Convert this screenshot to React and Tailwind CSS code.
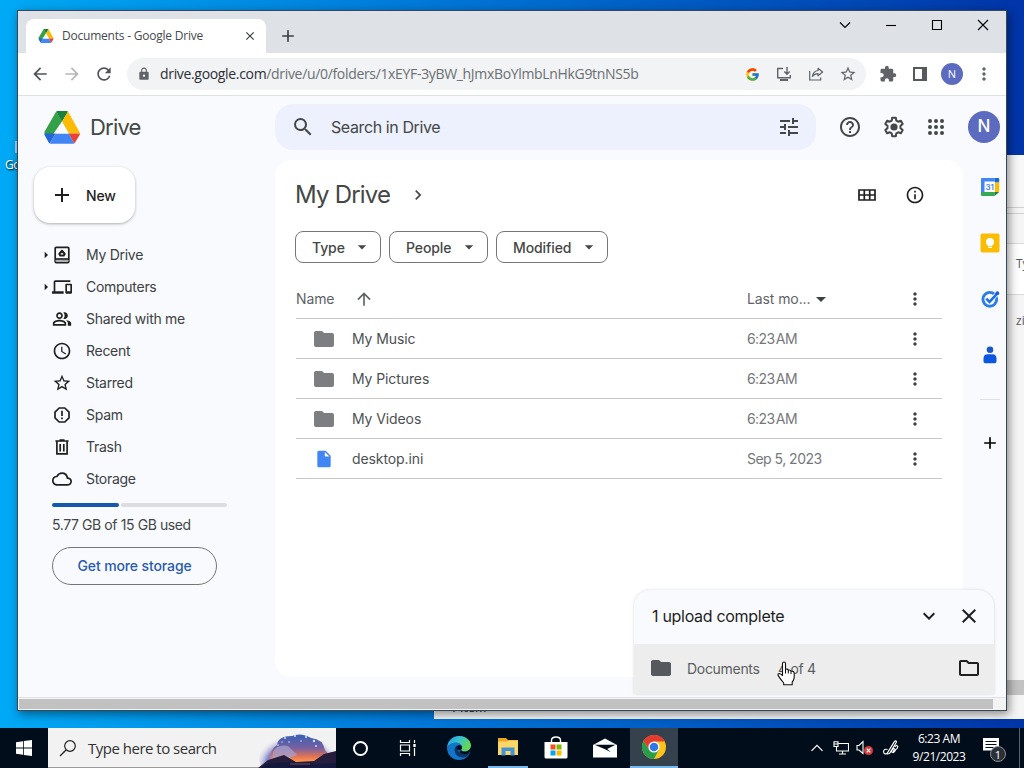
import React from "react";
import {
  MdAccessTime,
  MdAdd,
  MdArrowBack,
  MdArrowDropDown,
  MdArrowForward,
  MdArrowRight,
  MdArrowUpward,
  MdChevronRight,
  MdClose,
  MdExpandMore,
  MdExtension,
  MdFolder,
  MdHelpOutline,
  MdInfoOutline,
  MdInsertDriveFile,
  MdLock,
  MdMoreVert,
  MdOutlineCloud,
  MdOutlineDevices,
  MdOutlineFolder,
  MdOutlinePeopleAlt,
  MdRefresh,
  MdSearch,
  MdStarBorder,
  MdTune,
} from "react-icons/md";
import { FcGoogle } from "react-icons/fc";

// --- LOGOS AND CUSTOM ICONS ---
const DriveLogo = ({ className }) => (
  <svg viewBox="0 0 36 33" className={className}>
    <path d="M12.2 0.6 L0.8 20.2 Q0 21.6 0.8 23 L4.6 29.6 L18 10.4 Z" fill="#34a048" />
    <path d="M12.2 0.6 Q12.6 0 13.6 0 H22.4 Q23.6 0 24 0.6 L18 10.8 Z" fill="#188038" />
    <path d="M24 0.6 L35.2 20.4 Q36 21.8 35.9 22.4 H24.6 L18 10.8 Z" fill="#fcbc05" />
    <path d="M24.4 22.4 H36 Q36 23.2 35.4 24.2 L31.4 31 Q31 31.8 30.2 32.4 Z" fill="#ea4335" />
    <path d="M0.3 22.4 H11.6 L5.8 32.4 Q5.2 32 4.6 31.2 L0.8 24.4 Q0.2 23.4 0.3 22.4 Z" fill="#2566d8" />
    <path d="M11.6 22.4 H24.6 L30.2 32.4 Q29.6 32.8 28.6 32.8 H7.4 Q6.4 32.8 5.8 32.4 Z" fill="#4285f4" />
    <path d="M18 10.8 L24.8 22.4 H11.4 Z" fill="#f8fafd" />
  </svg>
);

const GearIcon = () => (
  <svg viewBox="0 0 24 24" className="size-6" fill="none" stroke="#444746" strokeWidth="2">
    <path d="M10.200 2.800h3.600l.5 2.800 1.900 1.100 2.700-1 1.800 3.200-2.200 1.800v2.600l2.200 1.800-1.800 3.200-2.700-1-1.900 1.100-.5 2.800h-3.600l-.5-2.800-1.900-1.100-2.700 1-1.800-3.200 2.200-1.800v-2.600L3.300 8.900l1.800-3.200 2.700 1 1.900-1.100z" strokeLinejoin="round" />
    <circle cx="12" cy="12" r="3.600" fill="#444746" stroke="none" />
  </svg>
);

const AppsIcon = () => (
  <svg viewBox="0 0 24 24" className="size-6" fill="#444746">
    {[6, 12, 18].map((y) => [6, 12, 18].map((x) => <circle key={`${x}-${y}`} cx={x} cy={y} r="2" />))}
  </svg>
);

const GridViewIcon = () => (
  <svg viewBox="0 0 18 12" className="h-3 w-[18px]" fill="none" stroke="#1f1f1f" strokeWidth="1.700">
    <path d="M1 1h16v10H1zM1 6h16M6.300 1v10M11.700 1v10" />
  </svg>
);

const MyDriveIcon = () => (
  <svg viewBox="0 0 20 20" className="size-5" fill="none" stroke="#1f1f1f" strokeWidth="1.700">
    <rect x="3.200" y="2.400" width="13.600" height="15.200" rx="1" />
    <path d="M3 14h14" />
    <path d="M8.300 10.600 7.300 9 10 5.700 12.700 9 11.700 10.600z" strokeWidth="2" strokeLinejoin="round" />
    <path d="M3 15.800h14" strokeWidth="1" stroke="#8a8d91" />
  </svg>
);

const SpamIcon = () => (
  <svg viewBox="0 0 20 20" className="size-5" fill="none" stroke="#1f1f1f" strokeWidth="1.700">
    <path d="M7.200 3h5.600L17 7.200v5.600L12.800 17H7.200L3 12.800V7.200z" strokeLinejoin="round" />
    <path d="M10 5.800v5.200M10 12.400v1.800" />
  </svg>
);

const TrashIcon = () => (
  <svg viewBox="0 0 20 20" className="size-5" fill="none" stroke="#1f1f1f" strokeWidth="1.700">
    <path d="M3.400 4h13.200M7.500 3h5M4.900 4.500v12.300h10.200V4.500M8.200 7v7.500M11.800 7v7.500" />
  </svg>
);

const InstallIcon = () => (
  <svg viewBox="0 0 16 16" className="size-4" fill="none" stroke="#5f6368" strokeWidth="1.400">
    <path d="M7 2.500H1.700v9.300h12.600V9M11 1v7M8.300 5.600 11 8.300l2.700-2.700" />
    <path d="M4 14h8" strokeWidth="2" />
  </svg>
);

const ShareIcon = () => (
  <svg viewBox="0 0 16 16" className="size-4" fill="none" stroke="#5f6368" strokeWidth="1.200">
    <path d="M1.700 5v9h11v-2.500" />
    <path d="M10 2.300 14.600 6 10 9.800V7.700c-2.700 0-4.400.9-5.600 2.800.4-3.300 2.300-5.500 5.600-6z" strokeLinejoin="round" />
  </svg>
);

const SidePanelIcon = () => (
  <svg viewBox="0 0 14 14" className="size-3.5">
    <path d="M1 1h12v12H1z" fill="none" stroke="#55585c" strokeWidth="2" />
    <path d="M9 0h5v14H9z" fill="#55585c" />
  </svg>
);

const CalendarIcon = () => (
  <svg viewBox="0 0 20 20" className="size-5">
    <path d="M2 1h12.500v4.500H5V15H1V2q0-1 1-1z" fill="#4285f4" />
    <path d="M14.500 1H18q1.200 0 1.200 1v3.500h-4.700z" fill="#1967d2" />
    <path d="M14.500 5.500h4.700v9.500h-4.700z" fill="#fbbc04" />
    <path d="M1 15h13.500v4H2q-1 0-1-1z" fill="#34a853" />
    <path d="M14.500 15h4.700l-4.700 4z" fill="#188038" />
    <path d="M4.500 4.500h10.300V15H4.500z" fill="#fff" />
    <text x="9.700" y="12.800" textAnchor="middle" fontSize="8" fontWeight="600" fontFamily="Inter, sans-serif" fill="#4285f4">31</text>
  </svg>
);

const KeepIcon = () => (
  <svg viewBox="0 0 20 20" className="size-5">
    <rect x="0.500" y="0.500" width="19" height="19" rx="1.800" fill="#fbbc04" />
    <circle cx="10" cy="9" r="4" fill="#fff" />
    <path d="M8 11h4v4H8z" fill="#fff" />
    <path d="M8 13.400h4" stroke="#fbbc04" strokeWidth=".7" />
  </svg>
);

const TasksIcon = () => (
  <svg viewBox="0 0 20 20" className="size-5" fill="none">
    <circle cx="9.800" cy="10.300" r="6.900" stroke="#2b7de9" strokeWidth="2.900" />
    <path d="m6.600 9.800 2.900 2.900 8.200-8.600" stroke="#f8fafd" strokeWidth="4.200" />
    <path d="m6.300 9.600 3.200 3.200 8.400-8.900" stroke="#1f6fe5" strokeWidth="2.600" />
    <circle cx="17.300" cy="4.200" r="1.900" fill="#1a5fd0" />
  </svg>
);

const ContactsIcon = () => (
  <svg viewBox="0 0 20 20" className="size-5">
    <circle cx="10" cy="4.700" r="3.300" fill="#1a56c4" />
    <path d="M3.500 13.500q0-4.300 4.300-4.300h4.400q4.300 0 4.300 4.300v3q0 1.800-1.800 1.800H5.300q-1.800 0-1.800-1.800z" fill="#0b57e0" />
  </svg>
);

const HandCursor = () => (
  <svg viewBox="0 0 18 25" className="absolute left-[777px] top-[661px] h-[25px] w-[18px]">
    <path
      d="M5.500 14.500V2.800Q5.500 1 7 1T8.500 2.800V8.300Q10.700 7.500 11.300 9.200 13.200 8.500 14 10.300 16.900 9.700 17.200 12.300V16.800Q16.600 19.500 15.200 21V23.700H6.700V22Q3.800 18.500 1.200 14.600.4 12.700 2.200 12.500 3.800 12.700 5.500 14.500z"
      fill="#fff" stroke="#111" strokeWidth="1.100" strokeLinejoin="round"
    />
    <path d="M8.500 8v4.500M11.300 9.200v3.300M14 10.300v2.700" stroke="#111" fill="none" />
  </svg>
);

// --- TASKBAR ICONS ---
const WindowsLogo = () => (
  <svg viewBox="0 0 16 16" className="size-4" fill="#fff">
    <path d="M0 2.200 7 1.200V7.500H0zM7.800 1.100 16 0v7.500H7.800zM0 8.400h7v6.400L0 13.800zM7.800 8.400H16V16l-8.200-1.100z" />
  </svg>
);

const SearchArt = () => (
  <svg viewBox="0 0 78 40" className="h-10 w-[78px]">
    <defs>
      <radialGradient id="halo" cx="50%" cy="62%" r="56%">
        <stop offset="0%" stopColor="#7478c8" />
        <stop offset="72%" stopColor="#8586cd" />
        <stop offset="100%" stopColor="#f2f2f2" stopOpacity="0" />
      </radialGradient>
      <linearGradient id="sky" x1="0" y1="0" x2="0" y2="1">
        <stop offset="0%" stopColor="#3760b5" />
        <stop offset="50%" stopColor="#77609f" />
        <stop offset="82%" stopColor="#e8764f" />
        <stop offset="100%" stopColor="#ff9c4f" />
      </linearGradient>
    </defs>
    <ellipse cx="39" cy="30" rx="38" ry="27" fill="url(#halo)" />
    <path d="M13 34Q11 22 19 17 20 8 34 8 43 4 53 10 65 11 67 22 73 28 70 34z" fill="url(#sky)" />
    <path d="M15 24Q19 16 30 18l9 9-14 6H14z" fill="#a6a3cf" opacity=".75" />
    <g fill="#cde5ff">
      <circle cx="27" cy="10" r="1" /><circle cx="31" cy="14" r=".8" /><circle cx="37" cy="8" r="1" />
      <circle cx="43" cy="13" r=".8" /><circle cx="48" cy="9" r="1" /><circle cx="56" cy="13" r="1.200" />
      <circle cx="20" cy="17" r=".8" /><circle cx="58" cy="18" r=".9" /><circle cx="24" cy="14" r=".7" />
    </g>
    <path d="M0 40 10 32 26 27 38 34 56 33 66 26 78 23V40z" fill="#241d3b" />
    <path d="M8 36q20-3 34-1t36 0v5H2z" fill="#13183c" />
    <path d="M32 36h20" stroke="#7a4a5c" />
  </svg>
);

const TaskViewIcon = () => (
  <svg viewBox="0 0 18 16" className="h-4 w-[18px]" fill="none" stroke="#fff" strokeWidth="1.200">
    <path d="M1.500 0v2.500h9V0M1.500 16v-2.500h9V16M1.500 5h9v6h-9zM15.500 0v3M15.500 8v8" />
    <path d="M15.500 4v3" strokeWidth="2.400" />
  </svg>
);

const EdgeLogo = () => (
  <svg viewBox="0 0 24 24" className="size-6">
    <defs>
      <linearGradient id="edgeTop" x1="0" y1="0" x2="1" y2="0.400">
        <stop offset="0%" stopColor="#1e9de0" />
        <stop offset="50%" stopColor="#35c1d0" />
        <stop offset="100%" stopColor="#66d752" />
      </linearGradient>
    </defs>
    <circle cx="12" cy="12" r="12" fill="#1275c8" />
    <path d="M.3 10.500C1.500 4 6.500 0 12.300 0 19 0 24 4.600 24 9.600c0 3.700-2.800 6-6 6-2.500 0-4-.8-4-1.600 0-.6 1-1.200 1-3 0-2.200-2.500-4.400-6-4.400-4 0-7.200 1.900-8.700 3.900z" fill="url(#edgeTop)" />
    <path d="M9.800 9.800c-1.700 1-2.600 3-2.100 5.400.7 3.700 4.300 6.600 8.600 6.200 2.700-.2 5-1.800 6.200-3.600.3-.5-.1-.9-.6-.6-1.600.8-3 1-4.700.8-4.500-.5-7.600-3.400-7.400-8.200z" fill="#0b3568" />
    <path d="M14 14c0 .8 1.500 1.600 4 1.600 3.200 0 6-2.300 6-6v5l-2 2.700c-3 1.600-7.500 1.200-9.800-1.300z" fill="#020d1b" />
    <circle cx="12.300" cy="11.600" r="2.700" fill="#020d1b" />
  </svg>
);

const ExplorerLogo = () => (
  <svg viewBox="0 0 22 20" className="h-5 w-[22px]">
    <path d="M1 1h8l2 2h10v4H1z" fill="#e9a820" />
    <path d="M1 4.500h9l2-1h9V18H1z" fill="#fcd667" />
    <path d="M4.500 10.500h13V18.500h-4V14h-5v4.500h-4z" fill="#4293d6" />
  </svg>
);

const StoreLogo = () => (
  <svg viewBox="0 0 24 24" className="size-6">
    <path d="M7.500 7V4.500Q7.500 1 12 1t4.500 3.500V7" fill="none" stroke="#fff" strokeWidth="1.400" />
    <path d="M.5 6h23v15q0 1.500-1.500 1.500H2Q.5 22.500.5 21z" fill="#fff" />
    <path d="M6.500 8.500h5v5h-5z" fill="#f25022" />
    <path d="M12.500 8.500h5v5h-5z" fill="#7fba00" />
    <path d="M6.500 14.500h5v5h-5z" fill="#00a4ef" />
    <path d="M12.500 14.500h5v5h-5z" fill="#ffb900" />
  </svg>
);

const MailLogo = () => (
  <svg viewBox="0 0 24 20" className="h-5 w-6">
    <path d="M0 7 12 .5 24 7v12.500H0z" fill="#fff" />
    <path d="M1.500 6.700h21L14.200 11l3.800 3.300L11.500 11z" fill="#020d1b" />
  </svg>
);

const ChromeLogo = () => (
  <svg viewBox="0 0 24 24" className="size-6">
    <circle cx="12" cy="12" r="12" fill="#fcc31c" />
    <path d="M12 6.500h10.700A12 12 0 0 0 1.600 6l5.600 8.700L12 12z" fill="#e33b2e" />
    <path d="M1.600 6A12 12 0 0 0 12 24l4.800-9.300L12 12l-4.800 2.700z" fill="#2a9d4a" />
    <circle cx="12" cy="12" r="5.600" fill="#fff" />
    <circle cx="12" cy="12" r="4.300" fill="#2f78e6" />
  </svg>
);

const NAV_ITEMS = [
  { label: "My Drive", icon: <MyDriveIcon />, caret: true },
  { label: "Computers", icon: <MdOutlineDevices className="size-5" />, caret: true },
  { label: "Shared with me", icon: <MdOutlinePeopleAlt className="size-5" /> },
  { label: "Recent", icon: <MdAccessTime className="size-5" /> },
  { label: "Starred", icon: <MdStarBorder className="size-5" /> },
  { label: "Spam", icon: <SpamIcon /> },
  { label: "Trash", icon: <TrashIcon /> },
  { label: "Storage", icon: <MdOutlineCloud className="size-5" /> },
];

const FILES = [
  { name: "My Music", date: "6:23 AM", folder: true },
  { name: "My Pictures", date: "6:23 AM", folder: true },
  { name: "My Videos", date: "6:23 AM", folder: true },
  { name: "desktop.ini", date: "Sep 5, 2023", folder: false },
];

// --- CHROME FRAME ---
const TabStrip = () => (
  <div className="flex h-[42px] shrink-0 bg-[#dee1e6] pl-2">
    <div className="mt-2 flex h-[34px] w-60 items-center rounded-t-lg bg-white pl-3">
      <DriveLogo className="h-[14px] w-4" />
      <span className="ml-2 w-[178px] whitespace-nowrap text-[12px] tracking-[-0.22px] text-[#45494d]">Documents - Google Drive</span>
      <MdClose className="ml-[3px] size-3.5 text-[#3c4043]" />
    </div>
    <MdAdd className="ml-3 mt-[15px] size-5 text-[#3c4043]" />
    <div className="ml-auto flex h-7 items-center text-black">
      {["m1 3.500 5 5 5-5", "M1 6.500h10", "M1.500 1.500h9v9h-9z", "m1 1 10 10M11 1 1 11"].map((d) => (
        <div key={d} className="flex w-[46px] justify-center">
          <svg viewBox="0 0 12 12" className="size-3" fill="none" stroke="currentColor" strokeWidth="1.100">
            <path d={d} />
          </svg>
        </div>
      ))}
    </div>
  </div>
);

const Toolbar = () => (
  <div className="flex h-[43px] shrink-0 items-center border-b border-[#dfe2e4] bg-white text-[#5f6368]">
    <div className="flex w-[109px] items-center gap-3 pl-3">
      <MdArrowBack className="size-5 text-[#505357]" />
      <MdArrowForward className="size-5 text-[#b4b6b8]" />
      <MdRefresh className="size-5 text-[#505357]" />
    </div>
    <div className="flex h-8 w-[739px] items-center rounded-full bg-[#f1f3f4] pl-[10px]">
      <MdLock className="size-[14px]" />
      <span className="ml-[9px] whitespace-nowrap text-[14px] leading-5 tracking-[-0.33px] text-[#6b6f73]">
        <span className="text-[#2c2f33]">drive.google.com</span>/drive/u/0/folders/1xEYF-3yBW_hJmxBoYlmbLnHkG9tnNS5b
      </span>
      <div className="ml-auto mr-[10px] flex items-center gap-4">
        <FcGoogle className="size-[15px]" />
        <InstallIcon />
        <ShareIcon />
        <MdStarBorder className="-mx-px size-[18px]" />
      </div>
    </div>
    <div className="ml-[13px] flex items-center">
      <MdExtension className="size-[18px]" />
      <div className="ml-4"><SidePanelIcon /></div>
      <div className="ml-3.5 flex size-[22px] items-center justify-center rounded-full bg-[#5c6bc0] text-[11px] text-white">N</div>
      <MdMoreVert className="ml-[11px] size-5" />
    </div>
  </div>
);

// --- DRIVE PAGE ---
const DriveHeader = () => (
  <header className="flex h-16 shrink-0 items-center text-[#444746]">
    <div className="flex w-[257px] items-center pl-[26px]">
      <DriveLogo className="mb-0.5 h-[33px] w-9" />
      <span className="mb-px ml-2.5 text-[22px] tracking-[-0.8px]">Drive</span>
    </div>
    <div className="mb-0.5 flex h-[46px] w-[541px] items-center rounded-[18px] bg-[#edf1fd] pl-4">
      <MdSearch className="size-6" />
      <span className="ml-4 text-[16px] tracking-[-0.4px]">Search in Drive</span>
      <MdTune className="ml-auto mr-[15px] size-6" />
    </div>
    <div className="mb-0.5 flex items-center">
      <MdHelpOutline className="ml-[22px] size-6" />
      <div className="ml-5"><GearIcon /></div>
      <div className="ml-[18px]"><AppsIcon /></div>
      <div className="ml-5 flex size-8 items-center justify-center rounded-full bg-[#5c6bc0] text-[17px] font-medium text-white">N</div>
    </div>
  </header>
);

const Sidebar = () => (
  <aside className="w-[257px] shrink-0 pl-4 pt-[7px]">
    <button className="flex h-14 w-[101px] items-center rounded-2xl bg-white pl-4 text-[14px] font-medium tracking-[-0.2px] text-[#1f1f1f] shadow-[0_1px_3px_rgba(60,64,67,0.4)]">
      <MdAdd className="size-6" />
      <span className="ml-3">New</span>
    </button>
    <nav className="mt-4">
      {NAV_ITEMS.map((item) => (
        <div key={item.label} className="flex h-8 items-center text-[14px] tracking-[-0.28px] text-[#3c4043]">
          <div className="flex w-[18px] justify-center pl-1.5 text-[#1f1f1f]">
            {item.caret && <MdArrowRight className="size-4 shrink-0" />}
          </div>
          <div className="text-[#1f1f1f]">{item.icon}</div>
          <span className="mb-px ml-3.5">{item.label}</span>
        </div>
      ))}
    </nav>
    <div className="ml-[18px] mt-2 flex h-1 w-[175px] gap-0.5">
      <div className="w-[67px] rounded-full bg-[#1558b0]" />
      <div className="flex-1 rounded-full bg-[#dcdde0]" />
    </div>
    <p className="ml-[18px] mt-2 text-[14px] leading-5 tracking-[-0.4px] text-[#444746]">5.77 GB of 15 GB used</p>
    <button className="ml-[18px] mt-3 h-[38px] w-[165px] rounded-full border border-[#747775] pb-px text-[14px] font-medium tracking-[-0.12px] text-[#2a5aae]">
      Get more storage
    </button>
  </aside>
);

const FilterChip = ({ label, className }) => (
  <div className={`flex h-8 items-center rounded-lg border border-[#747775] pl-4 text-[14px] font-medium tracking-[-0.1px] text-[#444746] ${className}`}>
    {label}
    <MdArrowDropDown className="ml-auto mr-2 size-5" />
  </div>
);

const FileList = () => (
  <main className="h-[517px] w-[688px] shrink-0 rounded-2xl bg-white pl-5 pr-[21px]">
    <div className="flex h-[70px] items-center text-[#444746]">
      <h1 className="w-[113px] whitespace-nowrap text-[24px] tracking-[-0.8px]">My Drive</h1>
      <MdChevronRight className="size-5" />
      <div className="ml-auto mr-[66px]" />
      <GridViewIcon />
      <MdInfoOutline className="ml-[29px] mr-[17px] size-5 text-[#1f1f1f]" />
    </div>
    <div className="mt-px flex gap-2">
      <FilterChip label="Type" className="w-[86px]" />
      <FilterChip label="People" className="w-[99px]" />
      <FilterChip label="Modified" className="w-28" />
    </div>
    <div className="ml-px mt-4 text-[14px] tracking-[-0.1px] text-[#4d5053]">
      <div className="flex h-10 items-center border-b border-[#c7c7c7] text-[#5f6368]">
        <span className="w-[58px]">Name</span>
        <MdArrowUpward className="size-5" />
        <span className="ml-auto flex w-[158px] items-center">
          Last mo...
          <MdArrowDropDown className="-ml-px size-6 text-[#3c4043]" />
        </span>
        <MdMoreVert className="mr-[17px] size-5 text-[#3c4043]" />
      </div>
      {FILES.map((file) => (
        <div key={file.name} className="flex h-10 items-center border-b border-[#c7c7c7]">
          <div className="flex w-14 justify-center">
            {file.folder ? <MdFolder className="size-6 text-[#7c7e81]" /> : <MdInsertDriveFile className="size-5 text-[#4285f4]" />}
          </div>
          <span>{file.name}</span>
          <span className={`ml-auto w-[158px] text-[#75787b] ${file.folder ? "tracking-[-0.6px] [word-spacing:-2px]" : "tracking-[-0.52px]"}`}>
            {file.date}
          </span>
          <MdMoreVert className="mr-[17px] size-5 text-[#3c4043]" />
        </div>
      ))}
    </div>
  </main>
);

const SideRail = () => (
  <div className="flex flex-1 flex-col items-end gap-9 pr-1.5 pt-[17px]">
    <CalendarIcon />
    <KeepIcon />
    <TasksIcon />
    <ContactsIcon />
    <div className="-mb-[3px] -mt-0.5 h-px w-5 bg-[#dfe1e4]" />
    <MdAdd className="size-5 text-black" />
  </div>
);

const UploadToast = () => (
  <div
    className="absolute left-[616px] top-[579px] w-[360px] overflow-hidden rounded-t-2xl bg-[#f8fafd] shadow-[0_0_3px_rgba(60,64,67,0.2)]"
    style={{ fontFamily: "Inter, sans-serif" }}
  >
    <div className="flex h-[54px] items-center pb-0.5 pl-[18px] text-[#1f1f1f]">
      <span className="text-[16px] tracking-[-0.3px]">1 upload complete</span>
      <MdExpandMore className="ml-auto size-6" />
      <MdClose className="ml-4 mr-[13px] size-6" />
    </div>
    <div className="flex h-[50px] items-center bg-[#ededed] pb-0.5 pl-[15px] text-[14px] tracking-[-0.3px] text-[#5a5d60]">
      <MdFolder className="size-6 text-[#55585c]" />
      <span className="ml-3.5 w-[91px]">Documents</span>
      <span>4 of 4</span>
      <MdOutlineFolder className="ml-auto mr-[13px] size-6 text-[#1f1f1f]" />
    </div>
  </div>
);

const ChromeWindow = () => (
  <div className="absolute left-[17px] top-[10px] flex h-[701px] w-[990px] flex-col border border-[#36475a] bg-[#f8fafd] shadow-[2px_3px_9px_rgba(0,0,0,0.45)]">
    <TabStrip />
    <Toolbar />
    <div className="flex flex-1 flex-col" style={{ fontFamily: "Inter, sans-serif" }}>
      <DriveHeader />
      <div className="flex">
        <Sidebar />
        <FileList />
        <SideRail />
      </div>
    </div>
    <div className="flex h-[13px] shrink-0 items-center border-t border-[#e3e3e3] bg-[#f4f4f4] pl-px">
      <div className="h-[10px] w-[974px] bg-[#c1c1c1]" />
    </div>
    <UploadToast />
  </div>
);

// Explorer window peeking out behind Chrome
const BackWindow = () => (
  <div className="absolute left-[434px] top-[155px] flex h-[564px] w-[600px] flex-col bg-[#f5f5f5] text-[12px] text-[#55585c]">
    <div className="h-[53px] border-b border-[#d0d0d0] bg-[#f7f7f7]" />
    <div className="h-[6px] border-b border-[#d0d0d0]" />
    <div className="h-[29px]" />
    <div className="flex h-[52px] items-center border-y border-[#d9d9d9] bg-white pb-2.5 pl-[582px]">Ty</div>
    <div className="flex h-[60px] items-center pb-2 pl-[582px]">zi</div>
    <div className="mt-auto h-[15px] bg-[#c3c3c3]" />
    <div className="flex h-6 items-start pl-4 pt-[6px] text-[12px] font-semibold text-[#3c4043]">
      <span className="leading-[14px]">1 item</span>
    </div>
  </div>
);

// --- TASKBAR ---
const Taskbar = () => (
  <div className="absolute bottom-0 left-0 flex h-10 w-full items-center bg-[#020d1b] text-white">
    <div className="flex w-12 justify-center"><WindowsLogo /></div>
    <div className="flex h-10 w-72 items-center border-b border-[#9a9a9a] bg-[#f2f2f2]">
      <svg viewBox="0 0 18 18" className="ml-[11px] size-[18px]" fill="none" stroke="#222" strokeWidth="1.200">
        <circle cx="11" cy="7" r="5.300" />
        <path d="M7 11 1 17" />
      </svg>
      <span className="ml-[11px] w-[134px] whitespace-nowrap pt-0.5 text-[15px] tracking-[-0.5px] text-[#333]">Type here to search</span>
      <div className="ml-auto"><SearchArt /></div>
    </div>
    <div className="flex w-12 justify-center">
      <div className="size-[15px] rounded-full border-2 border-white" />
    </div>
    <div className="flex w-12 justify-center"><TaskViewIcon /></div>
    <div className="ml-0.5 flex w-[49px] justify-center"><EdgeLogo /></div>
    <div className="flex h-10 w-[49px] flex-col items-center">
      <div className="flex h-[38px] items-center"><ExplorerLogo /></div>
      <div className="h-0.5 w-10 bg-[#76b9ed]" />
    </div>
    <div className="flex w-12 justify-center"><StoreLogo /></div>
    <div className="flex w-[50px] justify-center"><MailLogo /></div>
    <div className="flex h-10 w-12 flex-col items-center bg-[#35414d]">
      <div className="flex h-[38px] items-center"><ChromeLogo /></div>
      <div className="h-0.5 w-12 bg-[#76b9ed]" />
    </div>
    <div className="ml-auto flex h-10 items-center">
      <svg viewBox="0 0 12 8" className="h-2 w-3" fill="none" stroke="#fff" strokeWidth="1.200">
        <path d="m.5 6.800 5.500-5.500 5.500 5.500" />
      </svg>
      <svg viewBox="0 0 16 14" className="ml-2.5 h-3.5 w-4" fill="none" stroke="#fff" strokeWidth="1.100">
        <path d="M5.500 2.500h10v7.500h-12V6.500M9.500 10v3M6 13h7M1 .8h4v4.700H1zM1 3h4M3.500 5.500v2" />
      </svg>
      <svg viewBox="0 0 18 16" className="ml-[7px] h-4 w-[18px]" fill="none" stroke="#fff" strokeWidth="1.100">
        <path d="M1 5.500h2L7 1.500v12L3 10H1z" />
        <circle cx="12.500" cy="10.500" r="4.500" fill="#d83b3b" stroke="none" />
        <path d="m10.700 8.700 3.600 3.600M14.300 8.700l-3.600 3.600" />
      </svg>
      <svg viewBox="0 0 18 18" className="ml-2 size-[18px]" fill="none" stroke="#fff" strokeWidth="1.200">
        <path d="M5.500 10.500Q2 9.500 1.500 12.500 2 16 5 14.500L12.500 2.500Q14 1 14.500 3L7.500 14.500 5 15M9 13.500q2-5 3.200-4 .5 1-1.500 4 1.500.5 3-3 3-2 1.600-3.500Q14 5.500 13 8" />
      </svg>
      <div className="ml-2.5 w-[58px] whitespace-nowrap text-center text-[12px] leading-[18px] tracking-[-0.45px]">
        <div>6:23 AM</div>
        <div>9/21/2023</div>
      </div>
      <div className="relative ml-[15px] mr-3 flex size-6 items-center">
        <svg viewBox="0 0 16 16" className="-mt-1 size-4">
          <path d="M0 0h16v12.500h-3V16l-3.500-3.500H0z" fill="#fff" />
          <path d="M2.500 3.500h11M2.500 6.500h11M2.500 9.500h8" stroke="#020d1b" />
        </svg>
        <span className="absolute left-[7px] top-2.5 flex size-4 items-center justify-center rounded-full border border-[#8b9097] bg-[#2b3038] text-[11px] leading-none">1</span>
      </div>
      <div className="mr-1 h-10 w-px bg-[#59616b]" />
    </div>
  </div>
);

const App = () => {
  return (
    <div
      className="relative h-[768px] w-[1024px] overflow-hidden bg-linear-to-r from-[#00a9f5] via-[#0074d5] via-45% to-[#0234a8]"
      style={{ fontFamily: '"Open Sans", "Noto Sans", sans-serif' }}
    >
      <div className="absolute left-[15px] top-[141px] h-3 w-1 bg-[#9fd4f7]" />
      <span className="absolute left-[5px] top-[157px] text-[12px] leading-4 tracking-[-0.5px] text-white [text-shadow:1px_1px_2px_#000]">Google</span>
      <BackWindow />
      <ChromeWindow />
      <Taskbar />
      <HandCursor />
    </div>
  );
};

export default App;
